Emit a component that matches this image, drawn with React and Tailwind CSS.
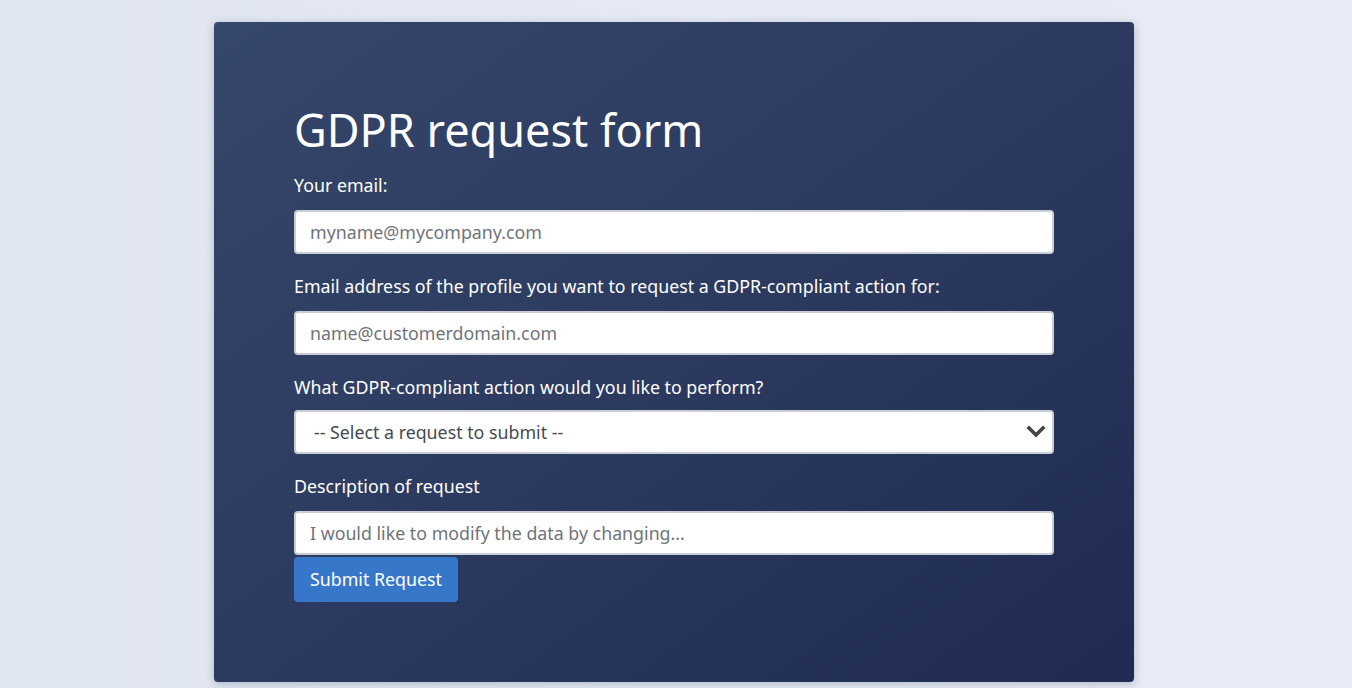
import React from "react";

const font = { fontFamily: '"Noto Sans", "Open Sans", sans-serif' };

function Field({ label, children }) {
  return (
    <div className="mb-[19px]">
      <label className="mb-[12px] block text-[17.8px] leading-[26px] text-white">{label}</label>
      {children}
    </div>
  );
}

function Chevron() {
  return (
    <svg width="20" height="14" viewBox="0 0 20 14" className="pointer-events-none absolute right-[8px] top-1/2 -translate-y-1/2">
      <path d="M3 3 L10 10 L17 3" fill="none" stroke="#444" strokeWidth="3.6" strokeLinecap="square" />
    </svg>
  );
}

export default function App() {
  const inputClass =
    "block h-[44px] w-full rounded-[4px] border-2 border-[#c9cdd6] bg-white px-[14px] text-[17.8px] text-gray-800 placeholder:text-[#6f737b] outline-none";

  return (
    <div className="min-h-[688px] bg-gradient-to-r from-[#dfe5f1] via-[#e4e9f3] to-[#e6ebf5] pt-[22px]" style={font}>
      <div className="ml-[214px] h-[660px] w-[920px] rounded-[4px] bg-gradient-to-br from-[#35476a] via-[#2c3a5f] to-[#1f2b52] px-[80px] pt-[82px] shadow-[0_2px_8px_rgba(30,40,80,0.25)]">
        <h1 className="mb-[14px] -mt-[2px] text-[45px] leading-[56px] font-normal text-white">GDPR request form</h1>
        <form>
          <Field label="Your email:">
            <input type="email" className={inputClass} placeholder="myname@mycompany.com" />
          </Field>
          <Field label="Email address of the profile you want to request a GDPR-compliant action for:">
            <input type="email" className={inputClass} placeholder="name@customerdomain.com" />
          </Field>
          <div className="mb-[19px]">
            <label className="mb-[10px] block text-[17.8px] leading-[26px] text-white">
              What GDPR-compliant action would you like to perform?
            </label>
            <div className="relative">
              <select className="block h-[44px] w-full appearance-none rounded-[4px] border-2 border-[#c9cdd6] bg-white px-[18px] text-[17.8px] text-[#454a52] outline-none">
                <option>-- Select a request to submit --</option>
                <option>Access my data</option>
                <option>Modify my data</option>
                <option>Delete my data</option>
              </select>
              <Chevron />
            </div>
          </div>
          <div>
            <label className="mb-[12px] block text-[17.8px] leading-[26px] text-white">Description of request</label>
            <textarea
              rows={1}
              className="block h-[44px] w-full resize-none rounded-[4px] border-2 border-[#c9cdd6] bg-white px-[14px] py-[7px] text-[17.8px] leading-[26px] text-gray-800 placeholder:text-[#6f737b] outline-none"
              placeholder="I would like to modify the data by changing..."
            />
          </div>
          <button
            type="button"
            className="mt-[2px] h-[45px] rounded-[4px] bg-[#3677c9] px-[16px] text-[17.8px] text-white"
          >
            Submit Request
          </button>
        </form>
      </div>
    </div>
  );
}
